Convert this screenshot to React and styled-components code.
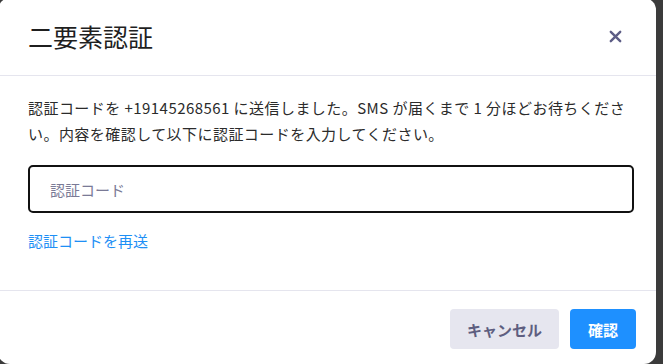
import React, { useState } from 'react'
import styled, { createGlobalStyle } from 'styled-components'

const GlobalStyle = createGlobalStyle`
  html, body {
    margin: 0;
    padding: 0;
    background: #3b3b3b;
    overflow: hidden;
  }
  body {
    font-family: "Noto Sans CJK JP", "Noto Sans", sans-serif;
  }
`

const TwoFactorModal = () => {
  const [code, setCode] = useState('')

  return (
    <Modal>
      <Header>
        <Title>二要素認証</Title>
        <CloseButton aria-label='閉じる'>
          <svg width='13' height='13' viewBox='0 0 13 13'>
            <path
              d='M1.8 1.8 L11.2 11.2 M11.2 1.8 L1.8 11.2'
              stroke='#5d5d86'
              strokeWidth='2.4'
              strokeLinecap='round'
            />
          </svg>
        </CloseButton>
      </Header>
      <Body>
        <Message>
          認証コードを +19145268561 に送信しました。SMS が届くまで 1 分ほどお待ちください。内容を確認して以下に認証コードを入力してください。
        </Message>
        <CodeInput
          autoFocus
          placeholder='認証コード'
          value={code}
          onChange={e => setCode(e.target.value)}
        />
        <ResendLink href='#'>認証コードを再送</ResendLink>
      </Body>
      <Footer>
        <Button>キャンセル</Button>
        <Button primary>確認</Button>
      </Footer>
    </Modal>
  )
}

const Modal = styled.div`
  display: flex;
  flex-direction: column;
  width: 658px;
  height: 366px;
  margin: -2px 0 0 -2px;
  background: #fff;
  border-radius: 12px;
  overflow: hidden;
`

const Header = styled.div`
  display: flex;
  align-items: center;
  justify-content: space-between;
  height: 78px;
  padding: 0 34px 0 30px;
  border-bottom: 1px solid #e5e5ee;
  box-sizing: border-box;
`

const Title = styled.h1`
  margin: 0;
  font-size: 25px;
  font-weight: 400;
  color: #1f1f1f;
  line-height: 1;
`

const CloseButton = styled.button`
  display: flex;
  align-items: center;
  justify-content: center;
  padding: 0;
  border: none;
  background: none;
  cursor: pointer;
`

const Body = styled.div`
  flex: 1;
  display: flex;
  flex-direction: column;
  align-items: flex-start;
  padding: 19px 22px 0 30px;
`

const Message = styled.p`
  margin: 0;
  font-size: 15px;
  line-height: 26px;
  letter-spacing: 0.45px;
  color: #2b2b2b;
`

const CodeInput = styled.input`
  width: 100%;
  height: 48px;
  margin-top: 18px;
  padding: 0 20px;
  box-sizing: border-box;
  border: 2px solid #111;
  border-radius: 5px;
  font-family: inherit;
  font-size: 15px;
  color: #222;
  caret-color: #111;
  outline: none;
  &::placeholder {
    color: #7a7a96;
  }
`

const ResendLink = styled.a`
  margin-top: 17px;
  font-size: 15px;
  line-height: 22px;
  color: #1e8ff5;
  text-decoration: none;
`

const Footer = styled.div`
  display: flex;
  justify-content: flex-end;
  gap: 11px;
  padding: 18px 20px 0 0;
  height: 74px;
  box-sizing: border-box;
  border-top: 1px solid #e5e5ee;
`

const Button = styled.button`
  height: 40px;
  padding: 0 ${props => (props.primary ? '18px' : '17px')};
  border: none;
  border-radius: 4px;
  font-family: inherit;
  font-size: 15px;
  font-weight: 700;
  cursor: pointer;
  background: ${props => (props.primary ? '#1e90ff' : '#e6e6ef')};
  color: ${props => (props.primary ? '#fff' : '#5e5e80')};
`

const App = () => (
  <>
    <GlobalStyle />
    <TwoFactorModal />
  </>
)

export default App
